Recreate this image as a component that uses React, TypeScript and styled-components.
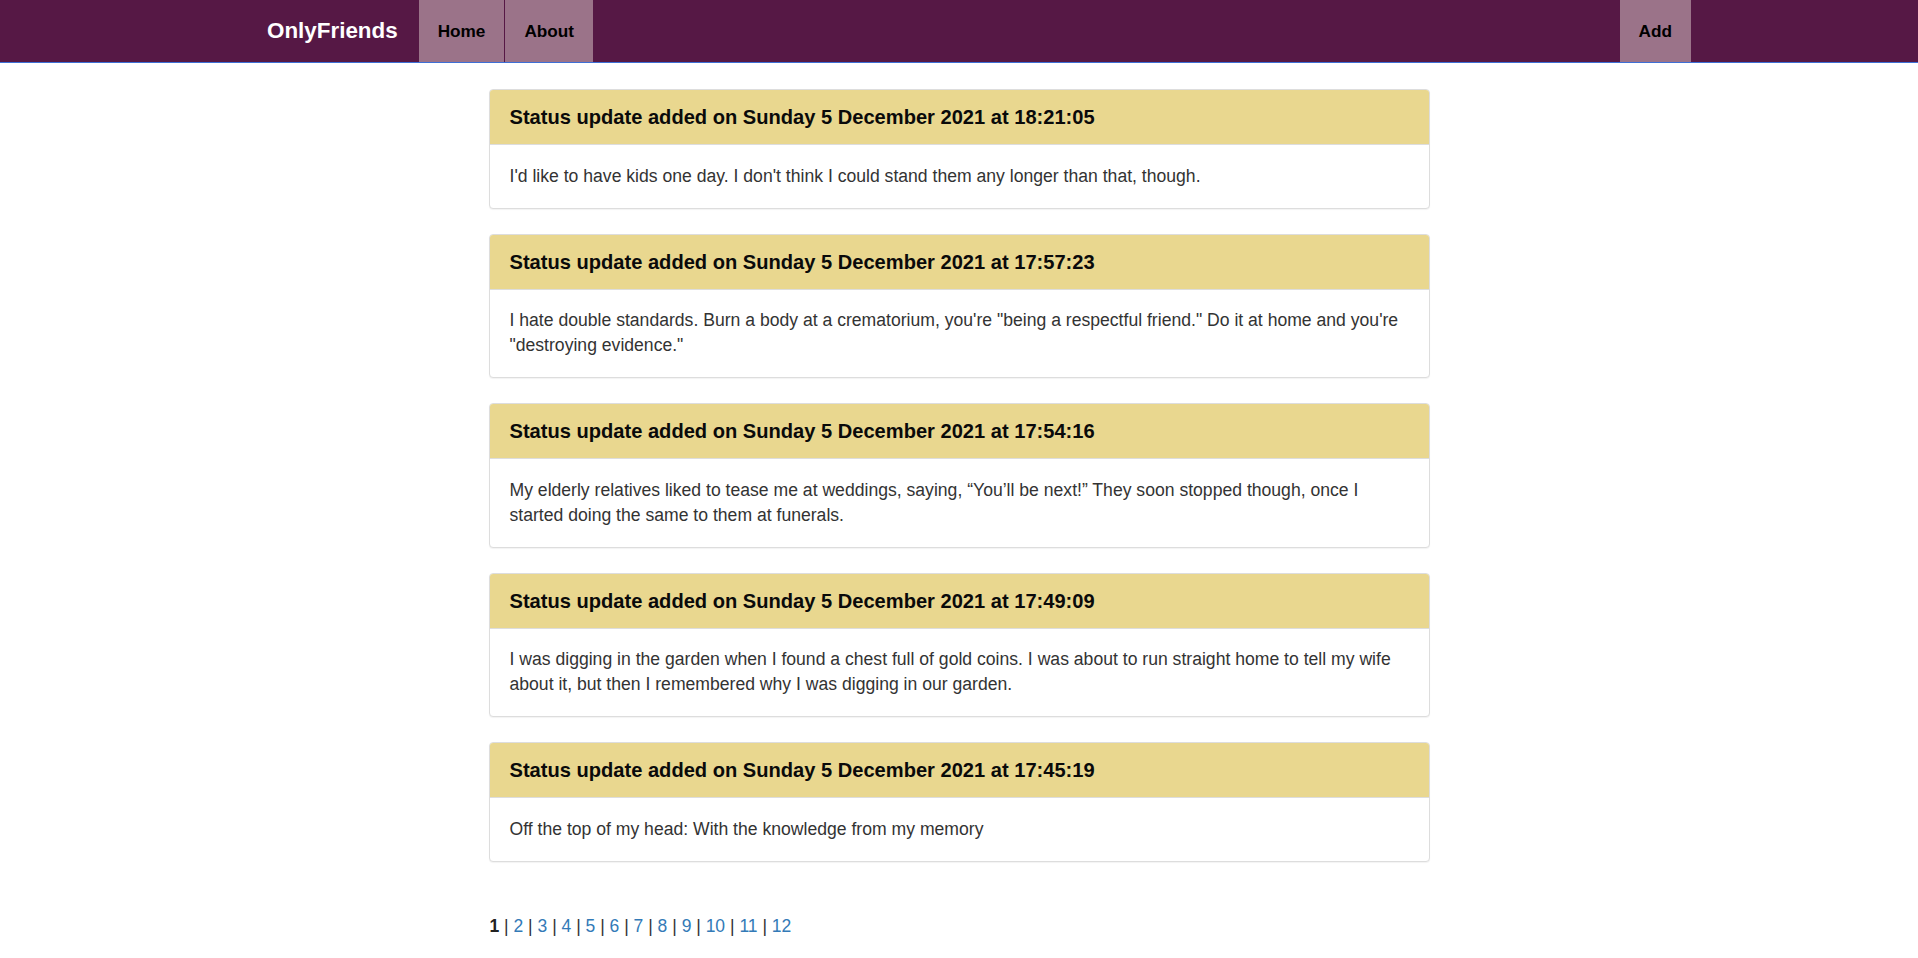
import React from "react";
import styled, { createGlobalStyle } from "styled-components";

const GlobalStyle = createGlobalStyle`
  html, body {
    margin: 0;
    padding: 0;
    background: #ffffff;
    font-family: "Liberation Sans", Arial, Helvetica, sans-serif;
    color: #333333;
  }
  * { box-sizing: border-box; }
`;

const NavBar = styled.nav`
  height: 63px;
  background: #561845;
  border-bottom: 1px solid #3d6fd6;
`;

const NavInner = styled.div`
  width: 1464px;
  height: 62px;
  margin: 0 auto;
  display: flex;
  align-items: stretch;
`;

const Brand = styled.a`
  display: flex;
  align-items: center;
  padding: 0 21px 0 40px;
  color: #ffffff;
  font-weight: bold;
  font-size: 22.4px;
  text-decoration: none;
`;

const NavGroup = styled.div<{ $right?: boolean }>`
  display: flex;
  gap: 1px;
  margin-left: ${(p) => (p.$right ? "auto" : "0")};
`;

const NavLink = styled.a`
  display: flex;
  align-items: center;
  padding: 0 19px;
  background: #9b7389;
  color: #000000;
  font-weight: bold;
  font-size: 17.2px;
  text-decoration: none;
`;

const Main = styled.main`
  width: 941px;
  margin: 26px auto 0;
`;

const Panel = styled.section`
  border: 1px solid #dddddd;
  border-radius: 4px;
  background: #ffffff;
  margin-bottom: 25px;
  box-shadow: 0 1px 1px rgba(0, 0, 0, 0.05);
`;

const PanelHeading = styled.h3`
  margin: 0;
  padding: 16px 20px;
  background: #e9d78f;
  border-bottom: 1px solid #dddddd;
  border-radius: 3px 3px 0 0;
  font-size: 20.1px;
  line-height: 22px;
  font-weight: bold;
  color: #0a0a0a;
`;

const PanelBody = styled.div`
  padding: 18.5px 20px 19px;
  font-size: 17.6px;
  line-height: 25px;
  color: #333333;
`;

const Pager = styled.div`
  margin: 52px 0 0 1px;
  font-size: 17.5px;
  line-height: 25px;
  color: #333333;
`;

const Current = styled.strong`
  color: #222222;
`;

const PageLink = styled.a`
  color: #337ab7;
  text-decoration: none;
`;

const statuses = [
  {
    when: "Sunday 5 December 2021 at 18:21:05",
    text: "I'd like to have kids one day. I don't think I could stand them any longer than that, though.",
  },
  {
    when: "Sunday 5 December 2021 at 17:57:23",
    text: "I hate double standards. Burn a body at a crematorium, you're \"being a respectful friend.\" Do it at home and you're \"destroying evidence.\"",
  },
  {
    when: "Sunday 5 December 2021 at 17:54:16",
    text: "My elderly relatives liked to tease me at weddings, saying, \u201cYou\u2019ll be next!\u201d They soon stopped though, once I started doing the same to them at funerals.",
  },
  {
    when: "Sunday 5 December 2021 at 17:49:09",
    text: "I was digging in the garden when I found a chest full of gold coins. I was about to run straight home to tell my wife about it, but then I remembered why I was digging in our garden.",
  },
  {
    when: "Sunday 5 December 2021 at 17:45:19",
    text: "Off the top of my head: With the knowledge from my memory",
  },
];

const pages = [1, 2, 3, 4, 5, 6, 7, 8, 9, 10, 11, 12];

export default function App() {
  return (
    <>
      <GlobalStyle />
      <NavBar>
        <NavInner>
          <Brand href="#">OnlyFriends</Brand>
          <NavGroup>
            <NavLink href="#">Home</NavLink>
            <NavLink href="#">About</NavLink>
          </NavGroup>
          <NavGroup $right>
            <NavLink href="#">Add</NavLink>
          </NavGroup>
        </NavInner>
      </NavBar>
      <Main>
        {statuses.map((s) => (
          <Panel key={s.when}>
            <PanelHeading>Status update added on {s.when}</PanelHeading>
            <PanelBody>{s.text}</PanelBody>
          </Panel>
        ))}
        <Pager>
          {pages.map((p, i) => (
            <React.Fragment key={p}>
              {i > 0 && " | "}
              {p === 1 ? <Current>1</Current> : <PageLink href="#">{p}</PageLink>}
            </React.Fragment>
          ))}
        </Pager>
      </Main>
    </>
  );
}
